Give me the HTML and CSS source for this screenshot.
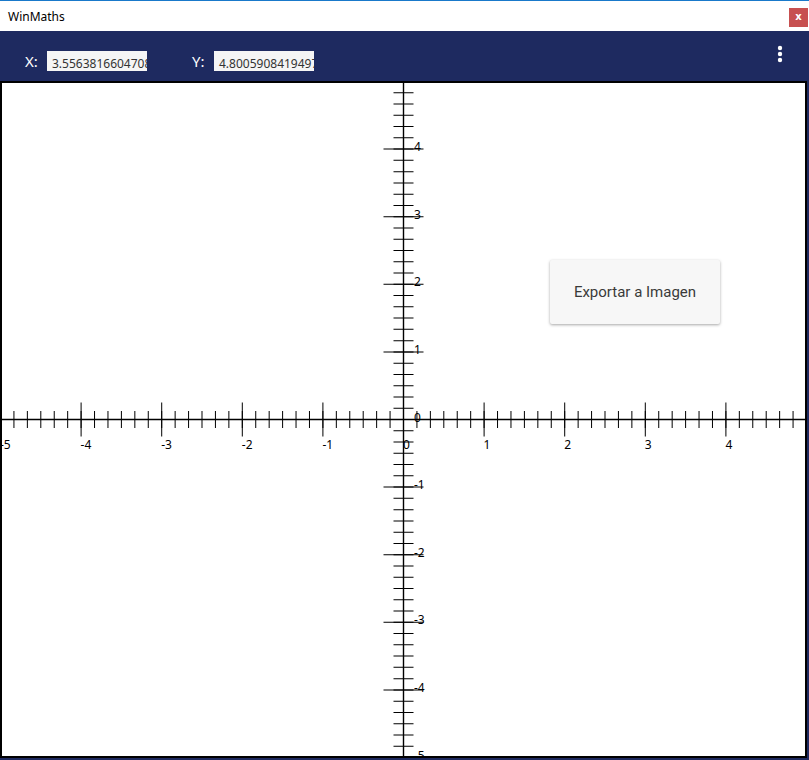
FILE: index.html
```html
<!DOCTYPE html>
<html lang="es">
<head>
<meta charset="utf-8">
<title>WinMaths</title>
<link rel="stylesheet" href="styles.css">
</head>
<body>
<div class="window">
  <div class="titlebar">
    <div class="title">WinMaths</div>
    <div class="close">x</div>
  </div>
  <div class="toolbar">
    <div class="label">X:</div>
    <div class="field"><span>3.5563816604708</span></div>
    <div class="label label-y">Y:</div>
    <div class="field"><span>4.8005908419497</span></div>
    <svg class="dots" width="10" height="20" viewBox="0 0 10 20">
      <circle cx="5" cy="4" r="2.2" fill="#fff"/>
      <circle cx="5" cy="10" r="2.2" fill="#fff"/>
      <circle cx="5" cy="16" r="2.2" fill="#fff"/>
    </svg>
  </div>
  <div class="canvas">
    <svg class="plot" width="803" height="673" viewBox="2 83 803 673">
      <g stroke="#000" fill="none">
        <line x1="0" y1="419.5" x2="807" y2="419.5" stroke-width="1.4"/>
        <line x1="403.5" y1="81" x2="403.5" y2="758" stroke-width="1.4"/>
        <line x1="0" y1="419.5" x2="807" y2="419.5" stroke-width="17" stroke-dasharray="1 12.4333"/>
        <line x1="0" y1="419.5" x2="807" y2="419.5" stroke-width="34" stroke-dasharray="1 79.6"/>
        <line x1="403.5" y1="81" x2="403.5" y2="758" stroke-width="20" stroke-dasharray="1 10.2667"/>
        <line x1="403.5" y1="81" x2="403.5" y2="758" stroke-width="40" stroke-dasharray="1 66.6"/>
      </g>
      <g class="ticklabels">
        <text x="0" y="449">-5</text>
        <text x="80.6" y="449">-4</text>
        <text x="161.2" y="449">-3</text>
        <text x="241.8" y="449">-2</text>
        <text x="322.4" y="449">-1</text>
        <text x="403" y="449">0</text>
        <text x="483.6" y="449">1</text>
        <text x="564.2" y="449">2</text>
        <text x="644.8" y="449">3</text>
        <text x="725.4" y="449">4</text>
        <text x="414" y="151">4</text>
        <text x="414" y="219">3</text>
        <text x="414" y="286">2</text>
        <text x="414" y="354">1</text>
        <text x="414" y="421.5">0</text>
        <text x="414" y="489">-1</text>
        <text x="414" y="557">-2</text>
        <text x="414" y="624">-3</text>
        <text x="414" y="692">-4</text>
        <text x="414" y="759.5">-5</text>
      </g>
    </svg>
    <div class="menu-card">Exportar a Imagen</div>
  </div>
</div>
</body>
</html>
```
FILE: styles.css
```css
html, body {
  margin: 0;
  padding: 0;
}
body {
  width: 809px;
  height: 760px;
  overflow: hidden;
  font-family: "Noto Sans", "Open Sans", sans-serif;
}
.window {
  display: flex;
  flex-direction: column;
  width: 809px;
  height: 760px;
  background: #1e2a60;
}
.titlebar {
  height: 30px;
  border-top: 1px solid #1979ca;
  background: #fff;
  display: flex;
  justify-content: space-between;
  align-items: flex-start;
  flex: none;
}
.title {
  margin: 9px 0 0 8px;
  font-size: 12px;
  line-height: 14px;
  color: #000;
}
.close {
  width: 19px;
  height: 19px;
  margin: 7px 1px 0 0;
  background: #c75050;
  color: #fff;
  font-family: "DejaVu Sans", sans-serif;
  font-weight: bold;
  font-size: 10px;
  line-height: 17px;
  text-align: center;
}
.toolbar {
  height: 50px;
  flex: none;
  box-sizing: border-box;
  display: flex;
  align-items: flex-end;
  padding: 0 0 10px 25px;
}
.label {
  width: 22px;
  color: #fff;
  font-size: 15px;
  line-height: 20px;
}
.label-y {
  margin-left: 45px;
}
.field {
  width: 100px;
  height: 20px;
  box-sizing: border-box;
  padding: 5px 0 0 5px;
  background: #f5f5f5;
  overflow: hidden;
  white-space: nowrap;
  font-size: 12px;
  line-height: 16px;
  color: #333;
}
.dots {
  align-self: flex-start;
  margin: 13px 24px 0 auto;
  display: block;
}
.canvas {
  flex: 1;
  margin: 0 2px 2px 0;
  border: 2px solid #000;
  background: #fff;
  position: relative;
  overflow: hidden;
}
.plot {
  display: block;
}
.ticklabels text {
  font-family: "Noto Sans", "Open Sans", sans-serif;
  font-size: 12px;
  fill: #000;
}
.menu-card {
  position: absolute;
  left: 548px;
  top: 177px;
  width: 170px;
  height: 64px;
  background: #f7f7f7;
  border-radius: 2px;
  box-shadow: 0 1px 3px rgba(0, 0, 0, 0.35);
  display: flex;
  align-items: center;
  justify-content: center;
  font-family: Roboto, "Noto Sans", sans-serif;
  font-size: 15px;
  color: #3a3a3a;
}
```
